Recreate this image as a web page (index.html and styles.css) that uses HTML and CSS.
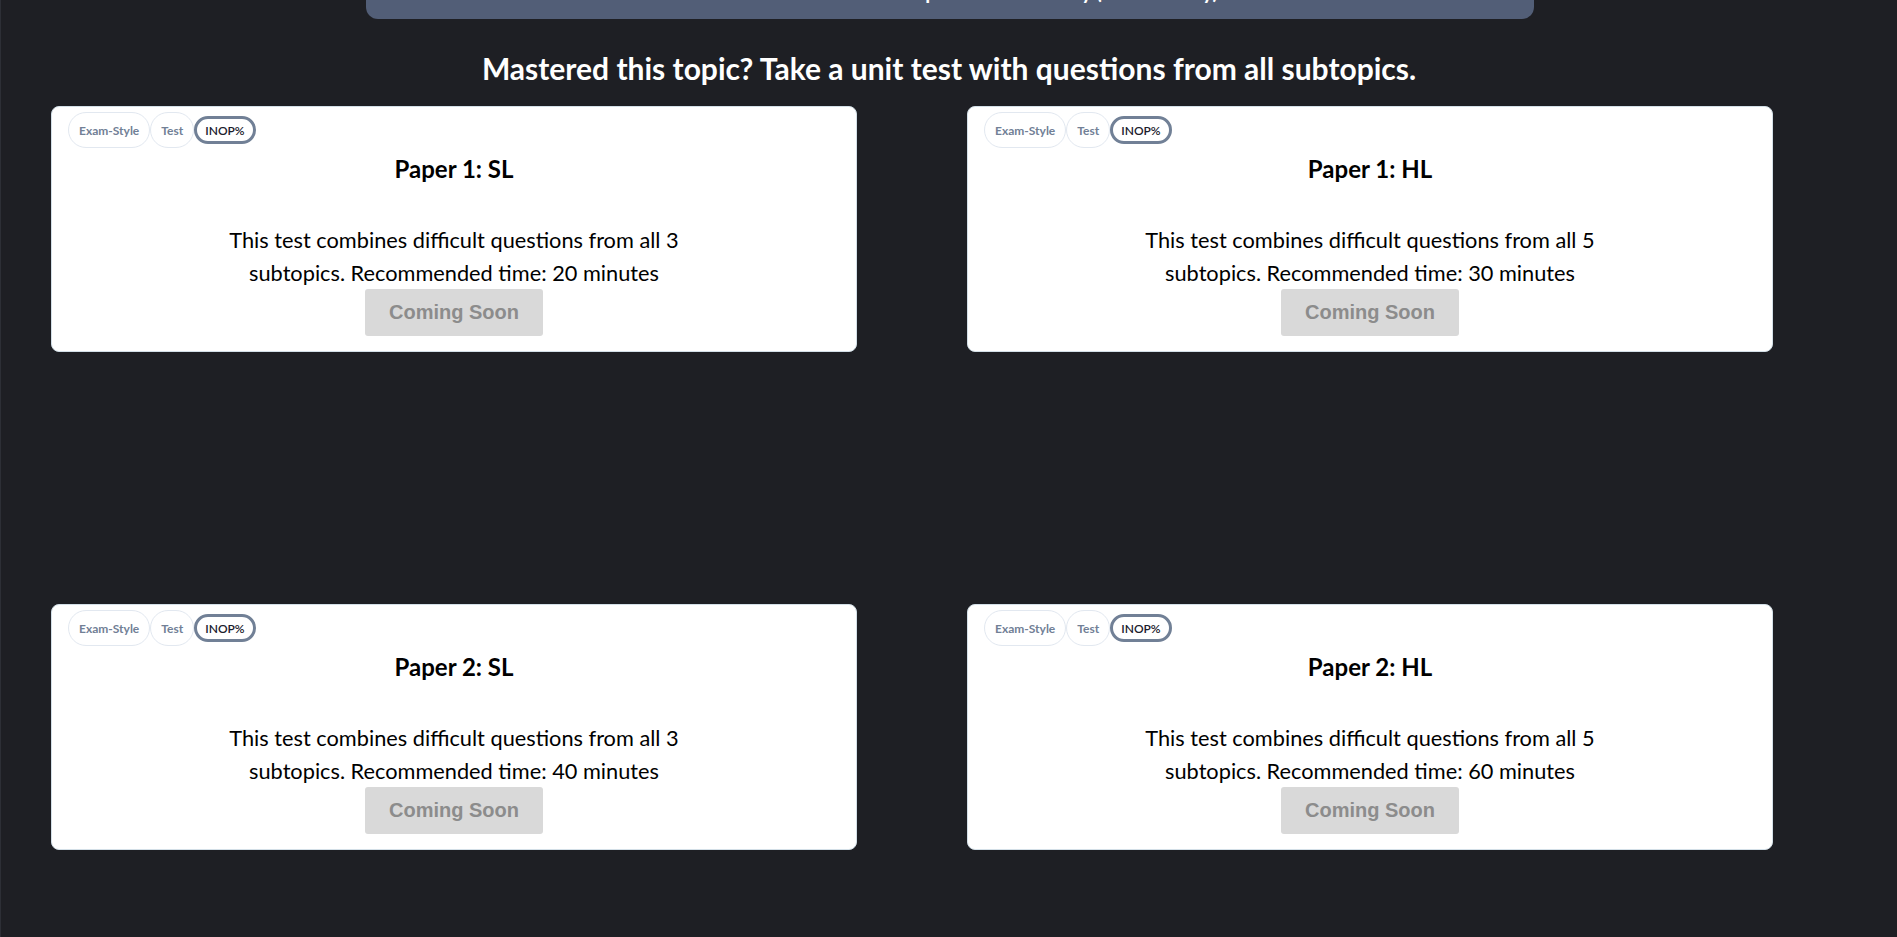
FILE: index.html
```html
<!DOCTYPE html>
<html lang="en">
<head>
<meta charset="utf-8">
<title>Unit Tests</title>
<link rel="stylesheet" href="styles.css">
</head>
<body>
<div class="page">
  <div class="topbar"><span class="topbar-text">Take the full Unit Test: Complete Unit Mastery (All Difficulty)</span></div>
  <h2 class="heading">Mastered this topic? Take a unit test with questions from all subtopics.</h2>
  <div class="grid">
    <div class="card">
      <div class="tags"><span class="tag">Exam-Style</span><span class="tag">Test</span><span class="tag tag-strong">INOP%</span></div>
      <h3 class="title">Paper 1: SL</h3>
      <p class="desc">This test combines difficult questions from all 3 subtopics. Recommended time: 20 minutes</p>
      <button class="soon">Coming Soon</button>
    </div>
    <div class="card">
      <div class="tags"><span class="tag">Exam-Style</span><span class="tag">Test</span><span class="tag tag-strong">INOP%</span></div>
      <h3 class="title">Paper 1: HL</h3>
      <p class="desc">This test combines difficult questions from all 5 subtopics. Recommended time: 30 minutes</p>
      <button class="soon">Coming Soon</button>
    </div>
    <div class="card">
      <div class="tags"><span class="tag">Exam-Style</span><span class="tag">Test</span><span class="tag tag-strong">INOP%</span></div>
      <h3 class="title">Paper 2: SL</h3>
      <p class="desc">This test combines difficult questions from all 3 subtopics. Recommended time: 40 minutes</p>
      <button class="soon">Coming Soon</button>
    </div>
    <div class="card">
      <div class="tags"><span class="tag">Exam-Style</span><span class="tag">Test</span><span class="tag tag-strong">INOP%</span></div>
      <h3 class="title">Paper 2: HL</h3>
      <p class="desc">This test combines difficult questions from all 5 subtopics. Recommended time: 60 minutes</p>
      <button class="soon">Coming Soon</button>
    </div>
  </div>
</div>
</body>
</html>
```

FILE: styles.css
```css
* { box-sizing: border-box; }

html, body {
  margin: 0;
  padding: 0;
  background: #1e1f24;
  overflow: hidden;
}

.page {
  min-height: 937px;
  border-left: 1px solid #2d2f36;
  font-family: "Lato", "Liberation Sans", sans-serif;
  display: flex;
  flex-direction: column;
  align-items: stretch;
}

.topbar {
  margin: -41px 0 0 365px;
  width: 1168px;
  height: 60px;
  background: #525e77;
  border-radius: 0 0 12px 12px;
  display: flex;
  justify-content: center;
  align-items: flex-end;
  overflow: hidden;
}

.topbar-text {
  color: #ffffff;
  font-weight: 700;
  font-size: 20px;
  line-height: 24px;
  margin-bottom: 16px;
  white-space: nowrap;
}

.heading {
  margin: 31px 0 20px;
  text-align: center;
  color: #ffffff;
  font-weight: 700;
  font-size: 30px;
  line-height: 36px;
}

.grid {
  display: grid;
  grid-template-columns: 806px 806px;
  column-gap: 110px;
  row-gap: 252px;
  padding-left: 50px;
}

.card {
  background: #ffffff;
  border: 1px solid #d3dfe7;
  border-radius: 8px;
  height: 246px;
  padding: 5px 16px 15px;
  display: flex;
  flex-direction: column;
  align-items: center;
}

.tags {
  align-self: stretch;
  display: flex;
  align-items: center;
  height: 36px;
}

.tag {
  display: inline-flex;
  align-items: center;
  height: 36px;
  padding: 0 10px;
  border: 1px solid #e2e8f0;
  border-radius: 18px;
  color: #718096;
  font-size: 12px;
  font-weight: 700;
}

.tag-strong {
  height: 28px;
  padding: 0 8px;
  border: 3px solid #718096;
  border-radius: 14px;
  color: #1a202c;
  font-weight: 600;
}

.title {
  margin: 6px 0 0;
  font-size: 24px;
  line-height: 29px;
  font-weight: 700;
  color: #000000;
}

.desc {
  margin: 41px 0 0;
  max-width: 500px;
  text-align: center;
  font-size: 21.75px;
  line-height: 32.6px;
  color: #000000;
}

.soon {
  margin: 0;
  padding: 12px 24px;
  border: none;
  border-radius: 3px;
  background: #d9d9d9;
  color: #8c8c8c;
  font-family: "Liberation Sans", Arial, sans-serif;
  font-weight: 700;
  font-size: 20px;
  line-height: 23px;
}
```
